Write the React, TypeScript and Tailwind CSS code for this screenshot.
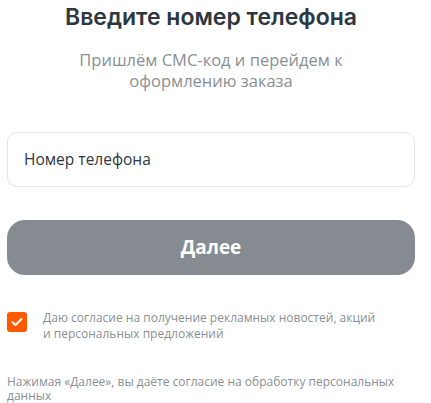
import { useState } from "react";

export default function App() {
  const [agree, setAgree] = useState(true);

  return (
    <div className="min-h-[403px] w-[431px] bg-white">
      <div className="ml-[7px] w-[408px] font-['Open_Sans',sans-serif]">
        <h1 className="pt-[3px] text-center font-['Inter',sans-serif] text-[23px] font-semibold leading-[28px] text-[#2d3741]">
          Введите номер телефона
        </h1>
        <p className="mt-[18px] text-center text-[16.5px] leading-[21px] text-[#8a8f95]">
          Пришлём СМС-код и перейдем к
          <br />
          оформлению заказа
        </p>

        <div className="mt-[41px] flex h-[55px] items-center rounded-[10px] border border-[#e4e5ea] px-[16px]">
          <input
            className="w-full bg-transparent text-[15.5px] text-[#2d3741] outline-none placeholder:text-[#2d3741]"
            placeholder="Номер телефона"
          />
        </div>

        <button className="mt-[33px] flex h-[55px] w-full items-center justify-center rounded-[18px] bg-[#868b91] text-[19px] font-bold text-white">
          Далее
        </button>

        <label className="mt-[36px] flex cursor-pointer items-start gap-[16px]">
          <span
            onClick={() => setAgree(!agree)}
            className={`mt-[1px] flex h-[20px] w-[20px] shrink-0 items-center justify-center rounded-[3px] ${
              agree ? "bg-[#ff5a00]" : "border border-[#c9ccd1] bg-white"
            }`}
          >
            {agree && (
              <svg width="12" height="10" viewBox="0 0 12 10" fill="none">
                <path d="M1.5 5.2 4.5 8 10.5 2" stroke="white" strokeWidth="2" strokeLinecap="round" strokeLinejoin="round" />
              </svg>
            )}
          </span>
          <span className="-mt-[1px] text-[12px] leading-[16px] text-[#8a8f95]">
            Даю согласие на получение рекламных новостей, акций
            <br />
            и персональных предложений
          </span>
        </label>

        <p className="mt-[33px] text-[12px] leading-[14px] text-[#8a8f95]">
          Нажимая «Далее», вы даёте согласие на обработку персональных данных
        </p>
      </div>
    </div>
  );
}
